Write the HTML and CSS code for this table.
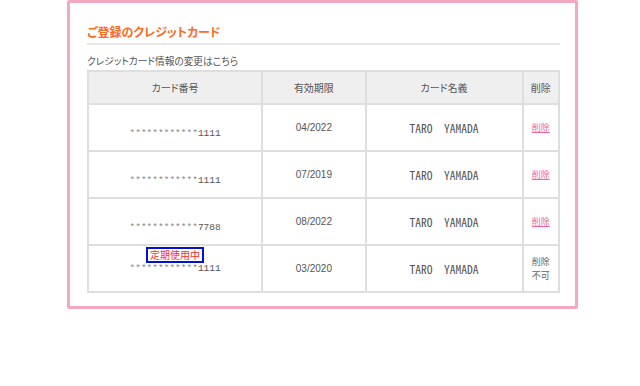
FILE: index.html
```html
<!DOCTYPE html>
<html lang="ja">
<head>
    <meta charset="UTF-8">
    <meta name="viewport" content="width=device-width, initial-scale=1.0">
    <title>ご登録のクレジットカード</title>
    <link rel="stylesheet" href="styles.css">
</head>
<body>

<div class="card-box">
    <h2 class="box-title">ご登録のクレジットカード</h2>
    <p class="box-note">クレジットカード情報の変更はこちら</p>

    <table class="card-table">
        <thead>
            <tr>
                <th class="col-number">カード番号</th>
                <th class="col-expire">有効期限</th>
                <th class="col-name">カード名義</th>
                <th class="col-delete">削除</th>
            </tr>
        </thead>
        <tbody>
            <tr>
                <td class="number"><span class="mask">************</span>1111</td>
                <td class="expire">04/2022</td>
                <td class="name">TARO　YAMADA</td>
                <td class="delete"><a href="#">削除</a></td>
            </tr>
            <tr>
                <td class="number"><span class="mask">************</span>1111</td>
                <td class="expire">07/2019</td>
                <td class="name">TARO　YAMADA</td>
                <td class="delete"><a href="#">削除</a></td>
            </tr>
            <tr>
                <td class="number"><span class="mask">************</span>7788</td>
                <td class="expire">08/2022</td>
                <td class="name">TARO　YAMADA</td>
                <td class="delete"><a href="#">削除</a></td>
            </tr>
            <tr>
                <!-- card in use for a subscription: label sits above the number -->
                <td class="number in-use">
                    <span class="number-wrap"><span class="badge">定期使用中</span><span class="mask">************</span>1111</span>
                </td>
                <td class="expire">03/2020</td>
                <td class="name">TARO　YAMADA</td>
                <td class="delete locked">削除<br>不可</td>
            </tr>
        </tbody>
    </table>
</div>

</body>
</html>
```

FILE: styles.css
```css
body {
    margin: 0;
    font-family: "Noto Sans CJK JP", sans-serif;
    color: #555;
    background-color: #fff;
}

.card-box {
    width: 473px;
    margin-left: 67px;
    padding: 20px 15px 13px 17px;
    border: 3px solid #f2a7c3;
    border-radius: 2px;
}

.box-title {
    margin: 0;
    padding-bottom: 3px;
    font-size: 12px;
    line-height: 17px;
    font-weight: bold;
    color: #fb6b1f;
    border-bottom: 2px solid #e8e8e8;
    font-feature-settings: "palt";
}

.box-note {
    margin: 9px 0 2px;
    font-size: 9.7px;
    line-height: 14px;
    color: #555;
    font-feature-settings: "palt";
}

.card-table {
    width: 473px;
    border-collapse: collapse;
    table-layout: fixed;
}

.card-table th, .card-table td {
    box-sizing: border-box;
    border: 2px solid #dedede;
    text-align: center;
    vertical-align: middle;
    padding: 0;
    font-weight: normal;
}

.card-table th {
    height: 33px;
    background-color: #efefef;
    font-size: 10px;
    color: #555;
    font-feature-settings: "palt";
}

.card-table td {
    height: 47px;
    font-size: 10px;
    line-height: 14px;
}

.col-number { width: 172px; }
.col-expire { width: 102px; }
.col-name { width: 155px; }
.col-delete { width: 36px; }

.number {
    padding-top: 13px !important;
    font-family: "Liberation Mono", monospace;
    font-size: 9.5px !important;
    color: #555;
}

.number.in-use {
    padding-top: 0 !important;
}

.mask {
    color: #888;
}

.number-wrap {
    position: relative;
    display: inline-block;
}

.badge {
    position: absolute;
    left: 50%;
    bottom: 100%;
    margin-bottom: -1px;
    transform: translateX(-50%);
    width: 50px;
    padding: 0 2px;
    border: 2px solid #0010d8;
    font-family: "Noto Sans CJK JP", sans-serif;
    font-size: 10px;
    line-height: 12px;
    color: #ff2a2a;
    white-space: nowrap;
}

.expire {
    font-family: "Liberation Sans", sans-serif;
    color: #555;
}

.name {
    font-family: "Noto Sans Mono CJK JP", "Liberation Mono", monospace;
    font-size: 11.5px !important;
    color: #555;
}

.delete a {
    color: #f0679a;
    font-size: 9px;
}

.delete.locked {
    font-size: 9px;
    color: #666;
}
```
